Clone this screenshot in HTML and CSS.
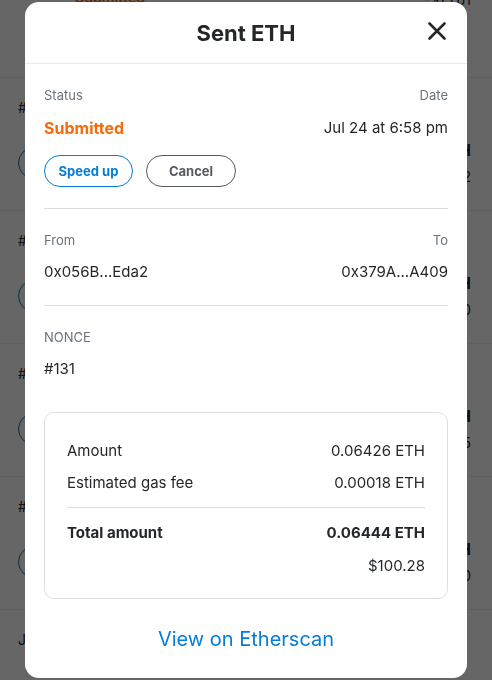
FILE: index.html
```html
<!DOCTYPE html>
<html lang="en">
<head>
    <meta charset="UTF-8">
    <meta name="viewport" content="width=device-width, initial-scale=1.0">
    <title>Sent ETH</title>
    <link rel="stylesheet" href="styles.css">
</head>
<body>
    <div class="activity">
        <div class="activity-row first">
            <div class="activity-item">
                <span class="activity-icon"></span>
                <div class="activity-info">
                    <div class="activity-title">Sent ETH</div>
                    <div class="activity-status pending">Submitted</div>
                </div>
                <div class="activity-amounts">
                    <div class="activity-eth">-0.01 ETH</div>
                    <div class="activity-fiat">-$15.61</div>
                </div>
            </div>
        </div>
        <div class="activity-row">
            <div class="activity-nonce">#134</div>
            <div class="activity-item">
                <span class="activity-icon"></span>
                <div class="activity-info">
                    <div class="activity-title">Sent ETH</div>
                    <div class="activity-status">Confirmed</div>
                </div>
                <div class="activity-amounts">
                    <div class="activity-eth">-0.0421 ETH</div>
                    <div class="activity-fiat">-$65.52</div>
                </div>
            </div>
        </div>
        <div class="activity-row">
            <div class="activity-nonce">#133</div>
            <div class="activity-item">
                <span class="activity-icon"></span>
                <div class="activity-info">
                    <div class="activity-title">Sent ETH</div>
                    <div class="activity-status">Confirmed</div>
                </div>
                <div class="activity-amounts">
                    <div class="activity-eth">-0.0312 ETH</div>
                    <div class="activity-fiat">-$48.60</div>
                </div>
            </div>
        </div>
        <div class="activity-row">
            <div class="activity-nonce">#132</div>
            <div class="activity-item">
                <span class="activity-icon"></span>
                <div class="activity-info">
                    <div class="activity-title">Sent ETH</div>
                    <div class="activity-status">Confirmed</div>
                </div>
                <div class="activity-amounts">
                    <div class="activity-eth">-0.0518 ETH</div>
                    <div class="activity-fiat">-$80.75</div>
                </div>
            </div>
        </div>
        <div class="activity-row">
            <div class="activity-nonce">#131</div>
            <div class="activity-item">
                <span class="activity-icon"></span>
                <div class="activity-info">
                    <div class="activity-title">Sent ETH</div>
                    <div class="activity-status">Confirmed</div>
                </div>
                <div class="activity-amounts">
                    <div class="activity-eth">-0.0644 ETH</div>
                    <div class="activity-fiat">-$100.20</div>
                </div>
            </div>
        </div>
        <div class="activity-row">
            <div class="activity-nonce">Jul 23</div>
        </div>
    </div>

    <div class="overlay">
        <div class="modal">
            <div class="modal-header">
                <h1 class="modal-title">Sent ETH</h1>
                <button class="modal-close" aria-label="Close">
                    <svg width="18" height="18" viewBox="0 0 18 18">
                        <path d="M1.5 1.5L16.5 16.5M16.5 1.5L1.5 16.5" stroke="#24272a" stroke-width="2.6" stroke-linecap="round"/>
                    </svg>
                </button>
            </div>

            <div class="modal-body">
                <div class="section">
                    <div class="pair">
                        <span class="label">Status</span>
                        <span class="label">Date</span>
                    </div>
                    <div class="pair values status-values">
                        <span class="status">Submitted</span>
                        <span class="value">Jul 24 at 6:58 pm</span>
                    </div>
                    <div class="actions">
                        <button class="pill pill-primary">Speed up</button>
                        <button class="pill pill-secondary">Cancel</button>
                    </div>
                </div>

                <div class="section">
                    <div class="pair">
                        <span class="label">From</span>
                        <span class="label">To</span>
                    </div>
                    <div class="pair values">
                        <span class="value">0x056B...Eda2</span>
                        <span class="value">0x379A...A409</span>
                    </div>
                </div>

                <div class="section no-border">
                    <div class="label caps">Nonce</div>
                    <div class="value nonce">#131</div>
                </div>

                <div class="summary">
                    <div class="summary-row">
                        <span>Amount</span>
                        <span>0.06426 ETH</span>
                    </div>
                    <div class="summary-row">
                        <span>Estimated gas fee</span>
                        <span>0.00018 ETH</span>
                    </div>
                    <div class="summary-row total">
                        <span>Total amount</span>
                        <span>0.06444 ETH</span>
                    </div>
                    <div class="summary-row fiat">
                        <span>$100.28</span>
                    </div>
                </div>

                <a class="explorer-link" href="#">View on Etherscan</a>
            </div>
        </div>
    </div>
</body>
</html>
```

FILE: styles.css
```css
* {
    box-sizing: border-box;
}
body {
    margin: 0;
    height: 100vh;
    overflow: hidden;
    background-color: #fff;
    font-family: Inter, "Noto Sans", sans-serif;
    color: #24272a;
}

/* activity list behind the modal */
.activity {
    height: 100vh;
    overflow: hidden;
}
.activity-row {
    height: 133px;
    padding: 20px 21px 0 18px;
    border-bottom: 1px solid #eeeeee;
}
.activity-row.first {
    margin-top: -55px;
}
.activity-nonce {
    font-size: 14px;
    line-height: 20px;
    color: #24272a;
}
.activity-item {
    display: flex;
    align-items: center;
    gap: 25px;
    margin-top: 20px;
}
.first .activity-item {
    margin-top: -4px;
}
.first .activity-icon {
    visibility: hidden;
}
.activity-icon {
    width: 32px;
    height: 32px;
    border: 1px solid #037dd6;
    border-radius: 50%;
}
.activity-info {
    flex: 1;
}
.activity-title {
    font-size: 16px;
    line-height: 24px;
}
.activity-status {
    font-size: 14px;
    line-height: 20px;
    color: #28a745;
}
.activity-status.pending {
    color: #f66a0a;
    font-weight: 700;
}
.activity-amounts {
    text-align: right;
}
.activity-eth {
    font-size: 16px;
    font-weight: 700;
    line-height: 24px;
}
.activity-fiat {
    font-size: 14px;
    line-height: 20px;
    margin-top: 5px;
}

/* modal */
.overlay {
    position: fixed;
    inset: 0;
    background-color: rgba(0, 0, 0, 0.6);
    display: flex;
    justify-content: center;
    align-items: center;
}
.modal {
    width: 442px;
    height: 676px;
    background-color: #fff;
    border-radius: 14px;
    display: flex;
    flex-direction: column;
    overflow: hidden;
}
.modal-header {
    height: 62px;
    border-bottom: 1px solid #e9eaeb;
    display: flex;
    align-items: center;
    justify-content: center;
    position: relative;
}
.modal-title {
    margin: 0;
    font-size: 22px;
    font-weight: 700;
}
.modal-close {
    position: absolute;
    right: 21px;
    top: 20px;
    padding: 0;
    border: none;
    background: none;
    display: flex;
}
.modal-body {
    padding: 0 19px;
}
.section {
    padding: 21px 0 21px;
    border-bottom: 1px solid #dcdddf;
}
.section + .section {
    padding-top: 21px;
    padding-bottom: 22px;
}
.section.no-border {
    border-bottom: none;
    padding-bottom: 0;
}
.pair {
    display: flex;
    justify-content: space-between;
}
.values {
    margin-top: 11px;
}
.status-values {
    margin-top: 12px;
}
.label {
    font-size: 13px;
    line-height: 20px;
    color: #6a737d;
}
.caps {
    text-transform: uppercase;
}
.value {
    font-size: 15px;
    line-height: 22px;
}
.nonce {
    margin-top: 11px;
}
.status {
    font-size: 16px;
    line-height: 22px;
    font-weight: 700;
    color: #f66a0a;
}
.actions {
    display: flex;
    gap: 13px;
    margin-top: 16px;
}
.pill {
    height: 32px;
    width: 89px;
    border-radius: 16px;
    background: #fff;
    font-family: inherit;
    font-size: 13px;
    font-weight: 700;
    cursor: pointer;
}
.pill-primary {
    border: 1.5px solid #037dd6;
    color: #037dd6;
}
.pill-secondary {
    width: 90px;
    border: 1.5px solid #535a61;
    color: #535a61;
}
.summary {
    margin-top: 32px;
    border: 1px solid #dcdddf;
    border-radius: 10px;
    padding: 27px 22px 21px;
}
.summary-row {
    display: flex;
    justify-content: space-between;
    font-size: 15px;
    line-height: 22px;
}
.summary-row + .summary-row {
    margin-top: 10px;
}
.summary-row.total {
    margin-top: 13px;
    padding-top: 14px;
    border-top: 1px solid #dcdddf;
    font-weight: 700;
}
.summary-row.fiat {
    justify-content: flex-end;
    margin-top: 11px;
}
.explorer-link {
    display: block;
    margin-top: 26px;
    text-align: center;
    font-size: 20px;
    line-height: 28px;
    color: #037dd6;
    text-decoration: none;
}
```
